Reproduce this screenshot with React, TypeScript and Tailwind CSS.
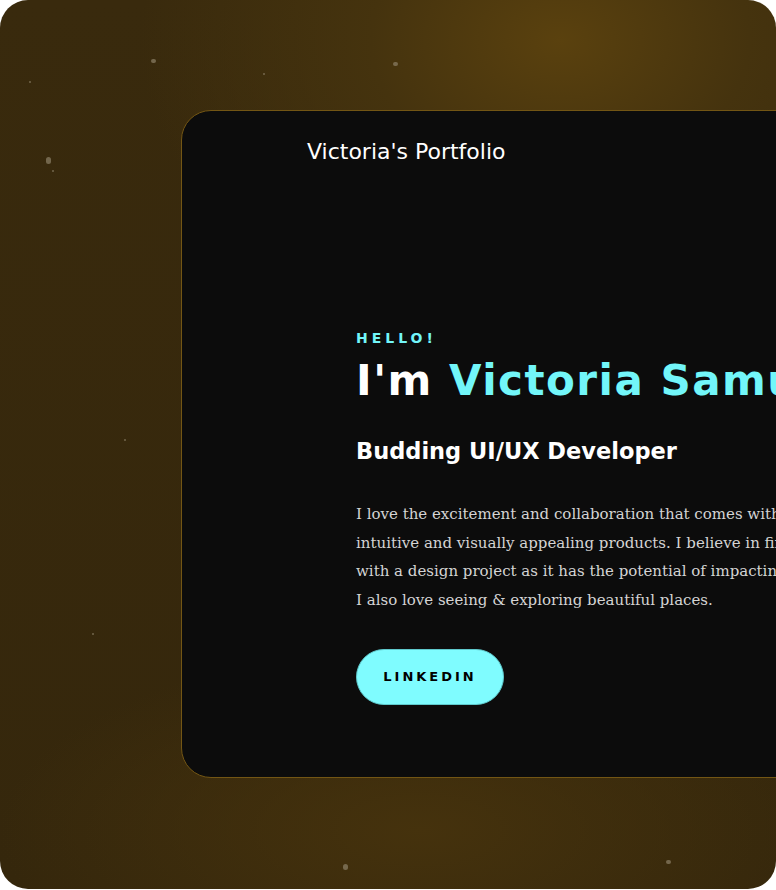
const specks = [
  { x: 151, y: 59, w: 5, h: 4 },
  { x: 263, y: 73, w: 2, h: 2 },
  { x: 393, y: 62, w: 5, h: 4 },
  { x: 29, y: 81, w: 2, h: 2 },
  { x: 46, y: 157, w: 5, h: 7 },
  { x: 52, y: 170, w: 2, h: 2 },
  { x: 124, y: 439, w: 2, h: 2 },
  { x: 92, y: 633, w: 2, h: 2 },
  { x: 343, y: 864, w: 5, h: 6 },
  { x: 666, y: 860, w: 5, h: 4 },
];

export default function App() {
  return (
    <div className="w-[776px] h-[890px] bg-white">
      <div
        className="relative w-[776px] h-[889px] rounded-[28px] overflow-hidden pt-[110px] pl-[181px] bg-[radial-gradient(ellipse_420px_300px_at_560px_40px,#5a410e_0%,#45330e_45%,transparent_100%),radial-gradient(ellipse_420px_180px_at_420px_830px,#45320d_0%,transparent_100%),linear-gradient(180deg,#392a0d,#35270c)]"
      >
        {specks.map((s, i) => (
          <span
            key={i}
            className="absolute rounded-full bg-[#8c8068] opacity-70"
            style={{ left: s.x, top: s.y, width: s.w, height: s.h }}
          />
        ))}

        <div className="relative w-[1000px] h-[668px] rounded-[30px] border border-[#735614] bg-[#0c0c0c]">
          <div
            className="pl-[125px] pt-[26px] text-[22px] leading-[30px] text-white"
            style={{ fontFamily: '"DejaVu Sans", Verdana, sans-serif' }}
          >
            Victoria's Portfolio
          </div>

          <div className="pl-[174px] pt-[162px]" style={{ fontFamily: '"DejaVu Sans", Verdana, sans-serif' }}>
            <p className="text-[14px] leading-[18px] font-bold tracking-[4px] text-[#72f6f9]">HELLO!</p>
            <h1 className="mt-[9px] text-[42px] leading-[50px] font-bold tracking-[1.5px] text-white whitespace-nowrap">
              I'm <span className="text-[#72f6f9]">Victoria Samuel</span>
            </h1>
            <h2 className="mt-[30px] text-[22.5px] leading-[30px] font-bold text-white">Budding UI/UX Developer</h2>

            <p
              className="mt-[34px] text-[15px] leading-[28.5px] text-[#d4d4d4] whitespace-nowrap"
              style={{ fontFamily: '"DejaVu Serif", Georgia, serif' }}
            >
              <span className="block">I love the excitement and collaboration that comes with creating</span>
              <span className="block">intuitive and visually appealing products. I believe in finding joy in working</span>
              <span className="block">with a design project as it has the potential of impacting lives positively.</span>
              <span className="block">I also love seeing &amp; exploring beautiful places.</span>
            </p>

            <button className="mt-[35px] w-[148px] h-[56px] rounded-full bg-[#7ffcff] border border-[#5fc9cc] text-[13px] font-bold tracking-[3px] text-black">
              LINKEDIN
            </button>
          </div>
        </div>
      </div>
    </div>
  );
}
